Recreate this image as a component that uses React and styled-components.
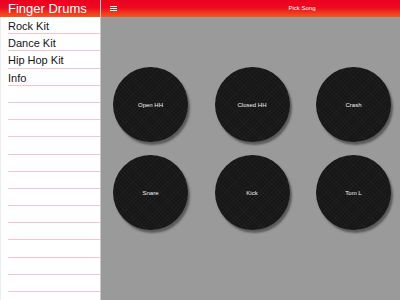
import React from "react";
import styled, { createGlobalStyle } from "styled-components";

const Global = createGlobalStyle`
  html, body { margin: 0; padding: 0; }
  body { width: 400px; height: 300px; overflow: hidden; font-family: "Liberation Sans", Arial, sans-serif; }
`;

const headerBg = "linear-gradient(to bottom, #ec0020 0%, #ec0a20 45%, #f0381e 75%, #f3561c 100%)";

const Shell = styled.div`
  display: flex;
  width: 400px;
  height: 300px;
  overflow: hidden;
`;

const Sidebar = styled.aside`
  width: 100px;
  flex: none;
  background: #fff;
  border-right: 1px solid #c8c8c8;
  box-shadow: inset 1px 0 0 #ececec;
  display: flex;
  flex-direction: column;
  overflow: hidden;
`;

const SideHeader = styled.div`
  height: 17px;
  flex: none;
  background: ${headerBg};
  color: #fff;
  font-size: 13px;
  line-height: 17px;
  padding-left: 8px;
  white-space: nowrap;
`;

const Row = styled.div`
  height: 13.2px;
  padding-top: 3px;
  flex: none;
  margin-left: 8px;
  border-bottom: 1px solid #f9c3ca;
  font-size: 11px;
  line-height: 13px;
  color: #141414;
  white-space: nowrap;
`;

const Main = styled.main`
  flex: 1;
  display: flex;
  flex-direction: column;
  background: #9a9a9a;
`;

const MainHeader = styled.div`
  height: 17px;
  flex: none;
  background: ${headerBg};
  display: flex;
  align-items: center;
  padding-left: 9px;
`;

const Burger = styled.div`
  width: 7px;
  display: flex;
  flex-direction: column;
  gap: 1px;
  span {
    display: block;
    height: 1.2px;
    background: #fff;
  }
`;

const Title = styled.div`
  flex: 1;
  text-align: center;
  padding-left: 87px;
  color: #fff;
  font-size: 6px;
  line-height: 17px;
`;

const Pads = styled.div`
  display: grid;
  grid-template-columns: repeat(3, 75px);
  grid-auto-rows: 75px;
  column-gap: 26.5px;
  row-gap: 13px;
  padding: 50px 0 0 12px;
`;

const Pad = styled.div`
  width: 75px;
  height: 75px;
  border-radius: 50%;
  background-color: #161616;
  background-image:
    repeating-linear-gradient(45deg, rgba(255,255,255,0.022) 0 1px, transparent 1px 3px),
    repeating-linear-gradient(-45deg, rgba(255,255,255,0.022) 0 1px, transparent 1px 3px);
  box-shadow: 2px 3px 2px rgba(40, 40, 40, 0.55);
  display: flex;
  align-items: center;
  justify-content: center;
  color: #f2f2f2;
  font-size: 6px;
`;

const kits = ["Rock Kit", "Dance Kit", "Hip Hop Kit", "Info"];
const pads = ["Open HH", "Closed HH", "Crash", "Snare", "Kick", "Tom L"];

export default function App() {
  const rows = [...kits, ...Array(14).fill("")];
  return (
    <>
      <Global />
      <Shell>
        <Sidebar>
          <SideHeader>Finger Drums</SideHeader>
          {rows.map((r, i) => (
            <Row key={i}>{r}</Row>
          ))}
        </Sidebar>
        <Main>
          <MainHeader>
            <Burger>
              <span />
              <span />
              <span />
            </Burger>
            <Title>Pick Song</Title>
          </MainHeader>
          <Pads>
            {pads.map((p) => (
              <Pad key={p}>{p}</Pad>
            ))}
          </Pads>
        </Main>
      </Shell>
    </>
  );
}
